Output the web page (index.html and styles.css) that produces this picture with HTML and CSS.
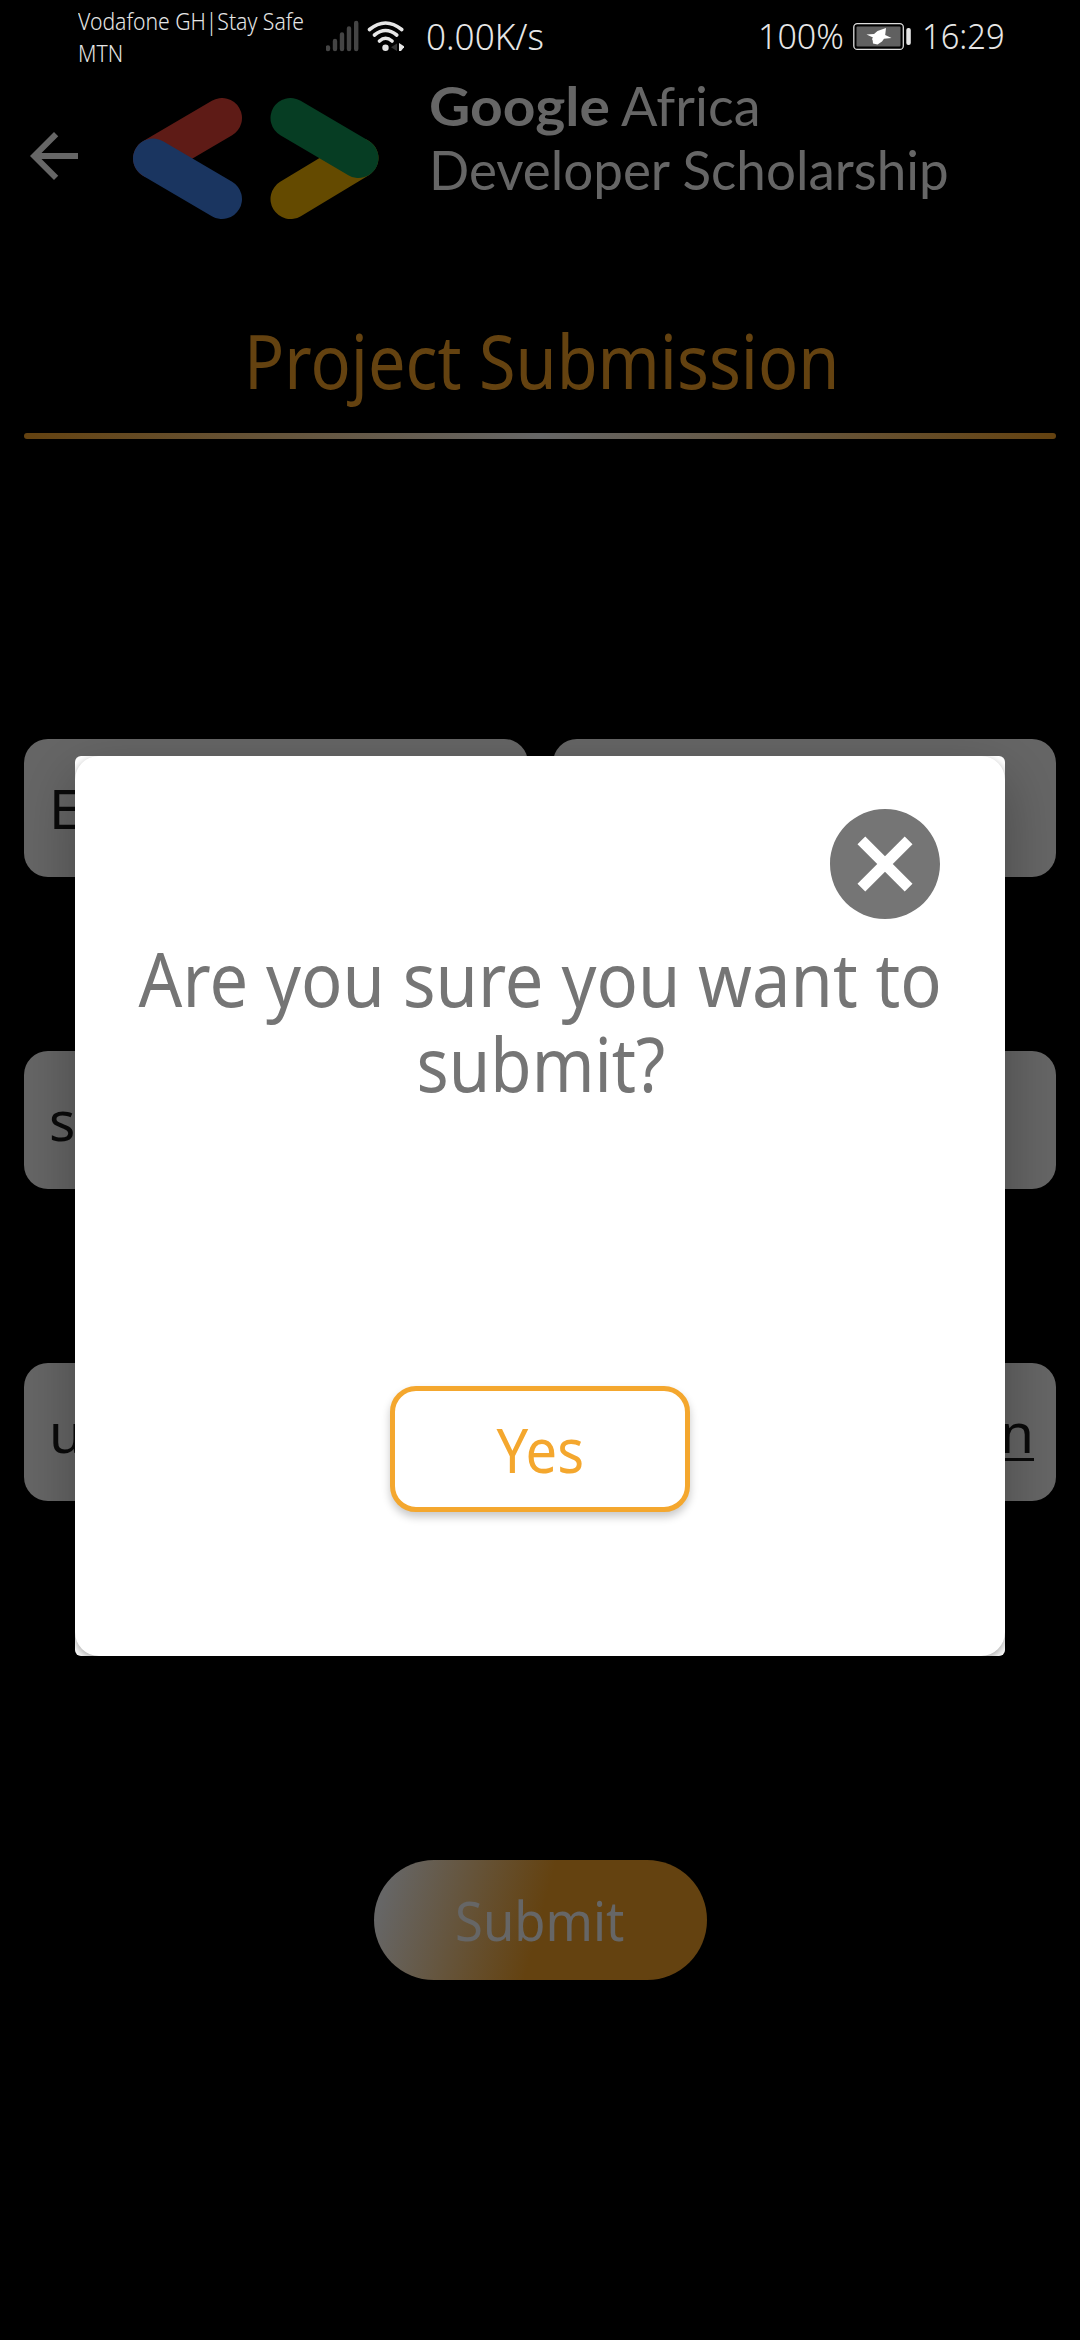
FILE: index.html
```
<!DOCTYPE html>
<html lang="en">
<head>
<meta charset="utf-8">
<title>Project Submission</title>
<link rel="stylesheet" href="styles.css">
</head>
<body>
<div class="status">
  <div class="carrier"><span>Vodafone GH|Stay Safe</span><span>MTN</span></div>
  <svg class="signal" viewBox="326 0 78 72" width="78" height="72">
    <g stroke="#444" stroke-width="4.4" stroke-linecap="round">
      <path d="M328 47.5V49M335 41V49M342 34.500V49M349 28.500V49M356.200 23V49"/>
    </g>
    <g fill="none" stroke="#e6e6e6" stroke-width="3.6" stroke-linecap="round">
      <path d="M369.500 29.500Q385.500 16.500 401.700 29.500M374.500 35Q385.500 26 396.700 35M379.500 41Q385.500 35.500 392 41"/>
    </g>
    <circle cx="385.500" cy="47.700" r="3.200" fill="#e6e6e6"/>
    <path d="M397 43.500v7.500l-6-3.700z" fill="#333"/>
    <path d="M399 43l5.500 3.500-3.500 4.500h-2z" fill="#e6e6e6"/>
  </svg>
  <span class="speed">0.00K/s</span>
  <span class="percent">100%</span>
  <svg class="battery" viewBox="853 0 59 72" width="59" height="72">
    <rect x="853.800" y="23.600" width="49.500" height="25.800" rx="3.500" fill="none" stroke="#ddd" stroke-width="1.300"/>
    <rect x="856.500" y="26.500" width="44" height="20" rx="1" fill="#606060"/>
    <path d="M866.500 34.500l7.500-.5 3.500-3 8.500-3-.8 7 6.300 3-7.500.8-2 2.700-4.500 3-4.500-1-.3-3-.7-1.500 1-1.500z" fill="#fff"/>
    <rect x="906.300" y="28" width="4.500" height="17" rx="2" fill="#e6e6e6"/>
  </svg>
  <span class="clock">16:29</span>
</div>

<header class="header">
  <svg class="back" viewBox="0 0 24 24" width="72" height="72"><path fill="#666" d="M20 11H7.830l5.590-5.590L12 4l-8 8 8 8 1.410-1.410L7.830 13H20z"/></svg>
  <svg class="logo" viewBox="133 98 246 122" width="246" height="122">
    <g stroke-width="40" stroke-linecap="round">
      <path d="M222 118L153 158.500" stroke="#5e1b16"/>
      <path d="M153 158.500L222 199" stroke="#1a3560"/>
      <path d="M290.500 199L358.500 158" stroke="#644a00"/>
      <path d="M290.500 118L358.500 158" stroke="#063d23"/>
    </g>
  </svg>
  <div class="brand">
    <div class="brand-line"><b class="google">Google</b><span class="africa">Africa</span></div>
    <div class="brand-line"><span class="scholarship">Developer Scholarship</span></div>
  </div>
</header>

<h1 class="title"><span>Project Submission</span></h1>
<div class="rule"></div>

<main class="form">
  <div class="row">
    <div class="field">E</div>
    <div class="field"></div>
  </div>
  <div class="row"><div class="field">su</div></div>
  <div class="row"><div class="field"><span>u</span><u>n</u></div></div>
</main>
<button class="submit"><span>Submit</span></button>

<section class="dialog">
  <div class="card">
    <svg class="close" viewBox="0 0 24 24" width="132" height="132"><path fill="#757575" d="M12 2C6.470 2 2 6.470 2 12s4.470 10 10 10 10-4.470 10-10S17.530 2 12 2zm5 13.590L15.590 17 12 13.410 8.410 17 7 15.590 10.590 12 7 8.410 8.410 7 12 10.590 15.590 7 17 8.410 13.410 12 17 15.590z"/></svg>
    <p class="question"><span class="q1">Are you sure you want to</span><span class="q2">submit?</span></p>
    <button class="yes"><span>Yes</span></button>
  </div>
</section>
</body>
</html>
```
FILE: styles.css
```
* { box-sizing: border-box; }
body {
  margin: 0;
  width: 1080px;
  height: 2340px;
  position: relative;
  overflow: hidden;
  background: #000;
  font-family: "Noto Sans", sans-serif;
  display: flex;
  flex-direction: column;
}
span, b { white-space: nowrap; }
button { font-family: inherit; }

.status {
  height: 72px;
  padding-left: 78px;
  display: grid;
  grid-template-columns: 248px 100px 332px 95px 69px 1fr;
  color: #e6e6e6;
  font-weight: 300;
  line-height: 73px;
}
.carrier {
  display: flex;
  flex-direction: column;
  padding-top: 5px;
  font-size: 23px;
  line-height: 32px;
  transform: scaleX(.92);
  transform-origin: left;
}
.speed { font-size: 36px; transform: scaleX(.975); transform-origin: left; }
.percent { font-size: 34px; transform-origin: left; }
.clock { font-size: 34px; transform: scaleX(.96); transform-origin: left; }

.header {
  height: 148px;
  display: flex;
  align-items: flex-start;
  padding-left: 18px;
}
.back { margin-top: 48px; }
.logo { margin: 26px 0 0 43px; }
.brand {
  margin: 2px 0 0 50px;
  font-family: Lato, sans-serif;
  font-size: 54px;
  line-height: 64px;
  color: #666;
}
.brand-line { display: flex; }
.google { width: 192px; transform: scaleX(1.055); transform-origin: left; }
.scholarship { transform: scaleX(.98); transform-origin: left; }

.title {
  margin: 91px 0 0;
  height: 100px;
  line-height: 100px;
  padding-left: 3px;
  font-size: 74px;
  font-weight: 400;
  text-align: center;
  color: #644210;
}
.title span { display: inline-block; transform: scaleX(.9); }
.rule {
  margin: 22px 24px 0;
  height: 6px;
  border-radius: 3px;
  background: linear-gradient(90deg, #644210, #666 50%, #644210);
}

.form {
  margin: 300px 24px 0;
  display: flex;
  flex-direction: column;
  gap: 174px;
}
.row { display: flex; gap: 25px; }
.field {
  flex: 1;
  height: 138px;
  padding: 0 22px 0 25px;
  border-radius: 24px;
  background: #666;
  color: #0a0a0a;
  font-size: 55px;
  line-height: 138px;
  display: flex;
  justify-content: space-between;
}
.field u { text-decoration-thickness: 3px; text-underline-offset: 5px; }
.submit {
  margin: 359px auto 0;
  width: 333px;
  height: 120px;
  padding: 0;
  border: 0;
  border-radius: 60px;
  background: linear-gradient(105deg, #666 5%, #644210 50%);
  color: #666;
  font-size: 55px;
  line-height: 120px;
}
.submit span { display: inline-block; transform: scaleX(.923); }

.dialog {
  position: absolute;
  left: 75px;
  top: 756px;
  width: 930px;
  height: 900px;
  border-radius: 6px;
  overflow: hidden;
  background: #fff;
  box-shadow: 0 20px 60px rgba(0, 0, 0, .3);
}
.card {
  height: 900px;
  border-radius: 24px;
  background: #fff;
  box-shadow: 0 3px 8px rgba(0, 0, 0, .35);
  display: flex;
  flex-direction: column;
  align-items: center;
}
.close { align-self: flex-end; margin: 42px 54px 0 0; }
.question {
  margin: 6px 0 0;
  padding-left: 1px;
  display: flex;
  flex-direction: column;
  align-items: center;
  font-size: 74px;
  line-height: 85px;
  color: #757575;
}
.q1 { transform: scaleX(.927); }
.q2 { transform: scaleX(.908); }
.yes {
  margin-top: 280px;
  width: 300px;
  height: 126px;
  padding: 0;
  border: 5px solid #f4a72e;
  border-radius: 26px;
  background: #fff;
  box-shadow: 0 5px 9px rgba(0, 0, 0, .22);
  color: #f4a72e;
  font-size: 62px;
  line-height: 116px;
}
.yes span { display: inline-block; transform: scaleX(.905); }
```
